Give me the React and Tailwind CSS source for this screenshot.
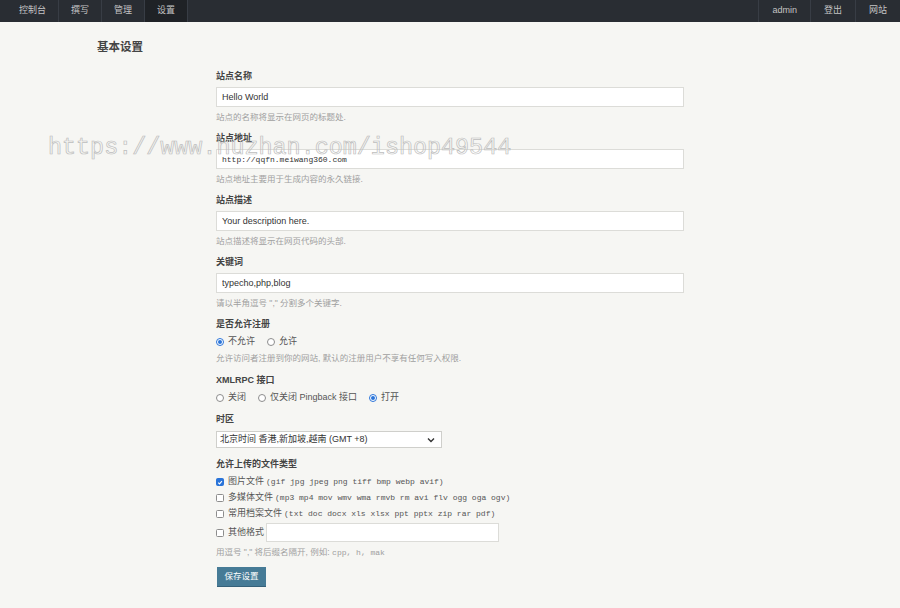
import React from "react";

const sans = "font-['Liberation_Sans','Noto_Sans_CJK_SC',sans-serif]";
const mono = "font-['Liberation_Mono','Noto_Sans_CJK_SC',monospace]";

const leftMenu = ["控制台", "撰写", "管理", "设置"];
const rightMenu = ["admin", "登出", "网站"];

function NavItem({ text, active }) {
  return (
    <a
      className={
        "flex h-full items-center px-[12px] border-r border-[#383d45] text-[9px] text-[#c4c4c4] " +
        (active ? "bg-[#1f2226]" : "")
      }
    >
      {text}
    </a>
  );
}

function Label({ children }) {
  return <label className="block h-[12px] leading-[12px] text-[9px] font-bold text-[#444]">{children}</label>;
}

function Help({ children }) {
  return <p className="mt-[4px] h-[12px] leading-[12px] text-[8.5px] text-[#a0a0a0]">{children}</p>;
}

function TextField({ label, value, help, code }) {
  return (
    <div className="mb-[9px]">
      <Label>{label}</Label>
      <input
        readOnly
        value={value}
        className={
          "mt-[5px] block h-[20px] w-[468px] border border-[#dcdcd8] bg-white px-[5px] text-[#333] outline-none " +
          (code ? mono + " text-[8px]" : "text-[9px]")
        }
      />
      <Help>{help}</Help>
    </div>
  );
}

function Radio({ checked, children }) {
  return (
    <span className="mr-[12px] flex items-center">
      <span
        className={
          "flex h-[8px] w-[8px] items-center justify-center rounded-full border " +
          (checked ? "border-[#2a74d9] bg-white" : "border-[#8d8d8d] bg-white")
        }
      >
        {checked && <span className="h-[4px] w-[4px] rounded-full bg-[#2a74d9]" />}
      </span>
      <span className="ml-[4px] text-[9px] text-[#555]">{children}</span>
    </span>
  );
}

function Check({ checked }) {
  return (
    <span
      className={
        "flex h-[8px] w-[8px] items-center justify-center rounded-[1.5px] border " +
        (checked ? "border-[#2a74d9] bg-[#2a74d9]" : "border-[#8d8d8d] bg-white")
      }
    >
      {checked && (
        <svg width="7" height="7" viewBox="0 0 10 10">
          <path d="M2 5.2 L4.2 7.4 L8.2 2.6" fill="none" stroke="#fff" strokeWidth="1.8" />
        </svg>
      )}
    </span>
  );
}

function FileType({ checked, name, exts }) {
  return (
    <div className="flex h-[16px] items-center">
      <Check checked={checked} />
      <span className="ml-[4px] text-[9px] text-[#555]">{name}</span>
      <span className={mono + " ml-[2px] text-[8px] text-[#555]"}>({exts})</span>
    </div>
  );
}

export default function App() {
  return (
    <div className={sans + " relative min-h-[608px] w-[900px] bg-[#f6f6f3]"}>
      <nav className="flex h-[22px] justify-between bg-[#292d33]">
        <div className="flex pl-[7px]">
          {leftMenu.map((t) => (
            <NavItem key={t} text={t} active={t === "设置"} />
          ))}
        </div>
        <div className="flex">
          {rightMenu.map((t) => (
            <a key={t} className="flex h-full items-center border-l border-[#383d45] px-[13px] text-[9px] text-[#c4c4c4]">
              {t}
            </a>
          ))}
        </div>
      </nav>

      <h2 className="ml-[97px] mt-[18px] h-[14px] leading-[14px] text-[11.5px] font-bold text-[#444]">基本设置</h2>

      <form className="ml-[216px] mt-[16px] w-[468px]">
        <TextField label="站点名称" value="Hello World" help="站点的名称将显示在网页的标题处." />
        <TextField label="站点地址" value="http://qqfn.meiwang360.com" code help="站点地址主要用于生成内容的永久链接." />
        <TextField label="站点描述" value="Your description here." help="站点描述将显示在网页代码的头部." />
        <TextField label="关键词" value="typecho,php,blog" help={'请以半角逗号 "," 分割多个关键字.'} />

        <div className="mb-[10px]">
          <Label>是否允许注册</Label>
          <div className="mt-[6px] flex h-[12px] items-center">
            <Radio checked>不允许</Radio>
            <Radio>允许</Radio>
          </div>
          <Help>允许访问者注册到你的网站, 默认的注册用户不享有任何写入权限.</Help>
        </div>

        <div className="mb-[9px]">
          <Label>XMLRPC 接口</Label>
          <div className="mt-[6px] flex h-[12px] items-center">
            <Radio>关闭</Radio>
            <Radio>仅关闭 Pingback 接口</Radio>
            <Radio checked>打开</Radio>
          </div>
        </div>

        <div className="mb-[10px]">
          <Label>时区</Label>
          <div className="mt-[6px] flex h-[17px] w-[226px] items-center justify-between border border-[#cfcfcb] bg-white pl-[3px] pr-[6px] text-[9px] text-[#333]">
            <span>北京时间 香港,新加坡,越南 (GMT +8)</span>
            <svg width="8" height="6" viewBox="0 0 8 6">
              <path d="M1 1.5 L4 4.5 L7 1.5" fill="none" stroke="#333" strokeWidth="1.4" />
            </svg>
          </div>
        </div>

        <div>
          <Label>允许上传的文件类型</Label>
          <div className="mt-[4px]">
            <FileType checked name="图片文件" exts="gif jpg jpeg png tiff bmp webp avif" />
            <FileType name="多媒体文件" exts="mp3 mp4 mov wmv wma rmvb rm avi flv ogg oga ogv" />
            <FileType name="常用档案文件" exts="txt doc docx xls xlsx ppt pptx zip rar pdf" />
            <div className="mt-[1px] flex h-[19px] items-center">
              <Check />
              <span className="ml-[4px] text-[9px] text-[#555]">其他格式</span>
              <input readOnly className="ml-[2px] h-[19px] w-[233px] border border-[#dcdcd8] bg-white outline-none" />
            </div>
          </div>
          <p className="mt-[4px] h-[12px] leading-[12px] text-[8.5px] text-[#a0a0a0]">
            用逗号 "," 将后缀名隔开, 例如: <span className={mono + " text-[8px]"}>cpp, h, mak</span>
          </p>
        </div>

        <button
          type="button"
          className="mt-[9px] ml-[1px] h-[19px] w-[49px] bg-[#467b96] text-[8.5px] text-white shadow-[0_1px_0_#35617a]"
        >
          保存设置
        </button>
      </form>

      {/* watermark overlay */}
      <div className="pointer-events-none absolute left-[48px] top-[134px] font-['Liberation_Mono',monospace] text-[23.4px] leading-[28px] text-transparent [-webkit-text-stroke:0.7px_#bdbdbd]">
        https://www.huzhan.com/ishop49544
      </div>
    </div>
  );
}
